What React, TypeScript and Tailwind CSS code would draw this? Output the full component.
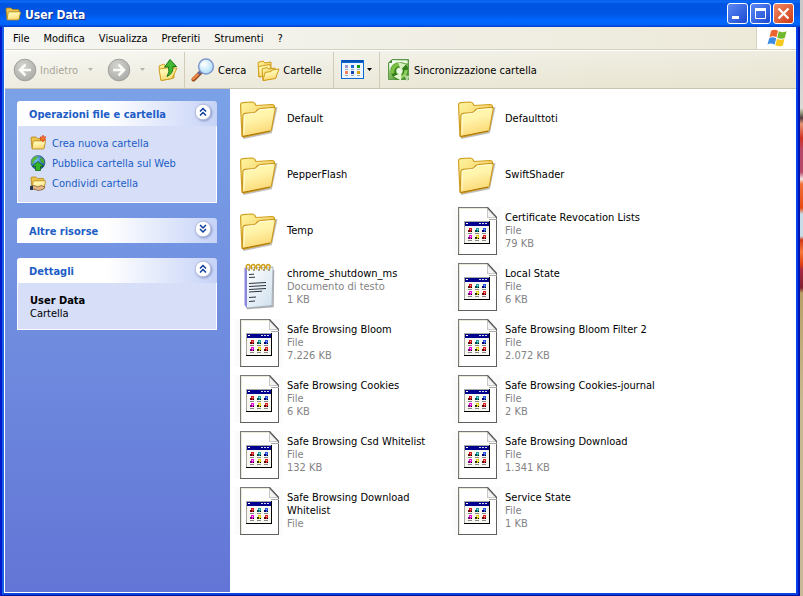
import type { ReactNode } from "react";

type Entry = { name: string; kind: "folder" | "text" | "file"; type?: string; size?: string };

const entries: Entry[] = [
  { name: "Default", kind: "folder" },
  { name: "Defaulttoti", kind: "folder" },
  { name: "PepperFlash", kind: "folder" },
  { name: "SwiftShader", kind: "folder" },
  { name: "Temp", kind: "folder" },
  { name: "Certificate Revocation Lists", kind: "file", type: "File", size: "79 KB" },
  { name: "chrome_shutdown_ms", kind: "text", type: "Documento di testo", size: "1 KB" },
  { name: "Local State", kind: "file", type: "File", size: "6 KB" },
  { name: "Safe Browsing Bloom", kind: "file", type: "File", size: "7.226 KB" },
  { name: "Safe Browsing Bloom Filter 2", kind: "file", type: "File", size: "2.072 KB" },
  { name: "Safe Browsing Cookies", kind: "file", type: "File", size: "6 KB" },
  { name: "Safe Browsing Cookies-journal", kind: "file", type: "File", size: "2 KB" },
  { name: "Safe Browsing Csd Whitelist", kind: "file", type: "File", size: "132 KB" },
  { name: "Safe Browsing Download", kind: "file", type: "File", size: "1.341 KB" },
  { name: "Safe Browsing Download Whitelist", kind: "file", type: "File" },
  { name: "Service State", kind: "file", type: "File", size: "1 KB" },
];

/* Gradients shared by every icon on the page. */
function IconDefs() {
  return (
    <svg className="absolute size-0" aria-hidden="true">
      <defs>
        <linearGradient id="folderFront" x1="0" y1="0" x2="0.3" y2="1">
          <stop offset="0" stopColor="#fffaa8" />
          <stop offset="0.45" stopColor="#fff4ac" />
          <stop offset="1" stopColor="#fcd874" />
        </linearGradient>
        <linearGradient id="folderBack" x1="0" y1="0" x2="1" y2="1">
          <stop offset="0" stopColor="#fff6a0" />
          <stop offset="1" stopColor="#eebc48" />
        </linearGradient>
        <linearGradient id="pad" x1="0" y1="0" x2="1" y2="1">
          <stop offset="0" stopColor="#ffffff" />
          <stop offset="1" stopColor="#cfe0ee" />
        </linearGradient>
        <radialGradient id="disc" cx="0.4" cy="0.3" r="0.8">
          <stop offset="0" stopColor="#d2d2ce" />
          <stop offset="1" stopColor="#a8a8a4" />
        </radialGradient>
        <radialGradient id="lens" cx="0.4" cy="0.35" r="0.7">
          <stop offset="0" stopColor="#ffffff" />
          <stop offset="1" stopColor="#a8dcf8" />
        </radialGradient>
        <linearGradient id="sync" x1="0" y1="0" x2="1" y2="1">
          <stop offset="0" stopColor="#e4f2dc" />
          <stop offset="0.35" stopColor="#8cc468" />
          <stop offset="1" stopColor="#3c8424" />
        </linearGradient>
        <radialGradient id="globe" cx="0.35" cy="0.3" r="0.8">
          <stop offset="0" stopColor="#7cc4f8" />
          <stop offset="1" stopColor="#0c3c9c" />
        </radialGradient>
      </defs>
    </svg>
  );
}

function FolderIcon() {
  return (
    <svg viewBox="0 0 48 48" className="size-12 shrink-0" aria-hidden="true">
      <path d="M8 43 L36 37.500 L41.500 12" fill="none" stroke="#8c8c8c" strokeOpacity="0.55" strokeWidth="2" />
      <path d="M5.500 10 Q5.500 8 7.500 7.700 L17 7 Q19 7 20 8.500 L21 10.500 L37 9.500 Q39.500 9.500 39.500 12 L36 34 L7 41 Z" fill="url(#folderBack)" stroke="#d0a020" strokeWidth="1.200" />
      <path d="M8 20 Q8.300 18.500 10 18.300 L19 17.500 Q20.500 17.300 21.500 16 L23 14.500 Q24 13.600 25.500 13.500 L38.500 12.300 Q40.500 12.300 40.200 14 L36.500 34.500 Q36.200 36 34.500 36.500 L9.500 42 Q7.300 42.300 7.300 40 Z" fill="url(#folderFront)" stroke="#cc981c" strokeWidth="1.200" />
      <path d="M9 39 L9.300 20.500 Q9.500 19.600 10.500 19.500 L20 18.600 L24.500 14.900 L38.500 13.700" fill="none" stroke="#fffde0" strokeWidth="1" />
      <path d="M7.500 41.500 L35 36" stroke="#a87400" strokeWidth="1" />
    </svg>
  );
}

function TextFileIcon() {
  return (
    <svg viewBox="0 0 48 48" className="size-12 shrink-0" aria-hidden="true">
      <path d="M12 45.500 L38 43.500 L38.500 7" fill="none" stroke="#888" strokeOpacity="0.7" strokeWidth="1.500" />
      <path d="M11 5 L38 4 L37 42.500 L11.500 45 Z" fill="url(#pad)" stroke="#9aa4b8" strokeWidth="0.800" />
      <path d="M9.500 4.500 L12 5 L12 45 L9.500 42 Z" fill="#8c88dc" />
      {[12, 17, 22, 27, 32].map((x) => (
        <g key={x} fill="none">
          <path d={`M${x} 6.500 Q${x - 2} 1.500 ${x + 1.5} 1.500 Q${x + 4} 2 ${x + 2.5} 6`} stroke="#d0a018" strokeWidth="1.500" />
          <path d={`M${x + 1} 7 h2`} stroke="#5c4808" strokeWidth="1" />
        </g>
      ))}
      <g stroke="#2c3440" strokeWidth="1">
        <path d="M14 11.500 L19 11.200 M14 14.500 L20 14.200" />
        <path d="M14 20.500 L31 19.500 M14 23.500 L31 22.500 M14 26.500 L31 25.500 M14 29 L27 28.200" />
        <path d="M14 34.500 L21 34 M14 38.500 L20 38" />
      </g>
    </svg>
  );
}

const miniIcons = [
  { x: 15, y: 21, main: "#d01818", side: "#680000" },
  { x: 22, y: 21, main: "#18a0a8", side: "#004848" },
  { x: 29, y: 21, main: "#2050e8", side: "#000068" },
  { x: 15, y: 28, main: "#e810d8", side: "#780078" },
  { x: 22, y: 28, main: "#e8d010", side: "#303000" },
  { x: 29, y: 28, main: "#e02020", side: "#680000" },
];

function GenericFileIcon() {
  return (
    <svg viewBox="0 0 48 48" className="size-12 shrink-0 bg-[#fbfbfb]" shapeRendering="crispEdges" aria-hidden="true">
      <path d="M5 0 H35 L44 9 V48 H5 Z" fill="#ffffff" />
      <path d="M6.500 47 V1.500 H34" fill="none" stroke="#e4ecd8" strokeWidth="1" />
      <path d="M5.500 48 V0.500 H35" fill="none" stroke="#787878" strokeWidth="1" />
      <path d="M5 47.500 H43.500 V10" fill="none" stroke="#606060" strokeWidth="1" />
      <path d="M34 1 L34 11 L44 11 Z" fill="#c8c8c8" shapeRendering="geometricPrecision" />
      <path d="M35 3 L35 10 L42 10 Z" fill="#f4f4f4" shapeRendering="geometricPrecision" />
      <path d="M34.500 0.500 L43.700 10.500" stroke="#505050" strokeWidth="1.200" shapeRendering="geometricPrecision" />
      <path d="M36 12.500 H44" stroke="#a8a8a8" strokeWidth="1" />
      <rect x="11" y="14" width="26" height="23" fill="#000000" />
      <rect x="11" y="14" width="25" height="22" fill="#a8a8a0" />
      <rect x="12" y="15" width="24" height="21" fill="#f8f8f0" />
      <rect x="12" y="15" width="24" height="4" fill="#000090" />
      <rect x="13" y="16" width="2" height="1" fill="#ffffff" />
      <rect x="26" y="16" width="2" height="1" fill="#d8d8f0" />
      <rect x="29" y="16" width="2" height="1" fill="#d8d8f0" />
      <rect x="32" y="16" width="2" height="1" fill="#d8d8f0" />
      {miniIcons.map((m) => (
        <g key={`${m.x}-${m.y}`}>
          <rect x={m.x + 1} y={m.y} width="3" height="4" fill={m.main} />
          <rect x={m.x} y={m.y + 2} width="2" height="2" fill={m.side} />
          <rect x={m.x + 3} y={m.y + 3} width="1" height="1" fill="#000000" />
          <rect x={m.x + 2} y={m.y + 1} width="1" height="1" fill="#ffffff" fillOpacity="0.6" />
          <rect x={m.x} y={m.y + 5} width="4" height="1" fill="#888888" />
        </g>
      ))}
    </svg>
  );
}

function SmallFolder({ children, className }: { children?: ReactNode; className: string }) {
  return (
    <svg viewBox="0 0 16 16" className={className} aria-hidden="true">
      <path d="M1 3 Q1 2 2 2 H6 L7.500 3.500 H13 Q14 3.500 14 4.500 V13 H2 Z" fill="#f0c450" stroke="#b08414" strokeWidth="0.800" />
      <path d="M2 14 L3.200 6.500 Q3.400 5.800 4 5.800 H15 Q15.700 5.800 15.500 6.500 L14 13.300 Q13.800 14 13 14 Z" fill="url(#folderFront)" stroke="#b08414" strokeWidth="0.800" />
      {children}
    </svg>
  );
}

function NewFolderIcon() {
  return (
    <SmallFolder className="size-4">
      <path d="M13 0 L13.800 2 L16 1.800 L14.800 3.500 L16 5 L13.800 5 L13 7 L12 5 L10 5.200 L11.200 3.500 L10 2 L12.200 2 Z" fill="#f07828" stroke="#d83010" strokeWidth="0.600" />
    </SmallFolder>
  );
}

function ShareFolderIcon() {
  return (
    <SmallFolder className="size-4">
      <path d="M1 11 L4 10.500 L8 12 L11 10.500 L15 12 L13 14.500 L8 15.500 L4 14 L1 14 Z" fill="#e8b888" stroke="#5c3c1c" strokeWidth="0.600" />
      <rect x="0" y="11" width="3" height="4" fill="#283850" />
    </SmallFolder>
  );
}

function PublishIcon() {
  return (
    <svg viewBox="0 0 16 16" className="size-4" aria-hidden="true">
      <circle cx="8" cy="7.500" r="7" fill="url(#globe)" stroke="#1c3870" strokeWidth="0.500" />
      <path d="M2 4 Q5 0.500 8 1 L7 4 L4 6 L3 9 L1.200 8 Z" fill="#58b838" />
      <path d="M11 2 L14 5 L14.500 9 L12 8 L10 5 Z" fill="#48a830" />
      <path d="M8 6.500 L13.500 11.500 H10.500 V15.500 H5.500 V11.500 H2.500 Z" fill="#34b428" stroke="#0c6410" strokeWidth="0.800" />
    </svg>
  );
}

function ArrowDisc({ flip }: { flip?: boolean }) {
  return (
    <svg viewBox="0 0 24 24" className="size-6 shrink-0" aria-hidden="true">
      <circle cx="12" cy="12" r="10.800" fill="url(#disc)" stroke="#a0a09c" strokeWidth="1" />
      <path
        d={flip ? "M6 12 H16 M11.500 6.500 L17 12 L11.500 17.500" : "M18 12 H8 M12.500 6.500 L7 12 L12.500 17.500"}
        fill="none"
        stroke="#fbfbf8"
        strokeWidth="2.600"
      />
    </svg>
  );
}

function Caret({ className }: { className: string }) {
  return (
    <svg viewBox="0 0 5 3" className={`h-[3px] w-[5px] shrink-0 ${className}`} aria-hidden="true">
      <path d="M0 0 H5 L2.500 3 Z" fill="currentColor" />
    </svg>
  );
}

function UpIcon() {
  return (
    <svg viewBox="0 0 22 24" className="h-6 w-[22px]" aria-hidden="true">
      <path d="M2 8 L7 6 L9 8 L17 7 L17 20 L4 22 Z" fill="url(#folderBack)" stroke="#c89818" strokeWidth="0.900" />
      <path d="M2 11 L13 9.500 L15 20.500 L4 22.500 Z" fill="url(#folderFront)" stroke="#c89818" strokeWidth="0.900" />
      <path d="M4 22.500 L15 20.500 L20 10 L17 10" fill="#fce488" stroke="#c89818" strokeWidth="0.900" />
      <path d="M13 1.500 L19.500 8.500 L16 8.500 Q16.500 15.500 10 18.500 Q13 14 11.500 8.800 L7.500 9.200 Z" fill="#44b834" stroke="#147814" strokeWidth="1" />
    </svg>
  );
}

function SearchIcon() {
  return (
    <svg viewBox="0 0 24 24" className="size-6 shrink-0" aria-hidden="true">
      <path d="M2.500 21.500 L10 14" stroke="#984818" strokeWidth="4" strokeLinecap="round" />
      <path d="M2.200 21 L7 16.300" stroke="#f08848" strokeWidth="2.400" strokeLinecap="round" />
      <path d="M7.500 16 L10.500 13" stroke="#5868a8" strokeWidth="2.600" />
      <circle cx="15" cy="8.500" r="7.400" fill="url(#lens)" stroke="#8098cc" strokeWidth="1.500" />
      <path d="M10.500 8 Q11 4.500 15 4" fill="none" stroke="#ffffff" strokeWidth="1.500" />
    </svg>
  );
}

function FoldersIcon() {
  return (
    <svg viewBox="0 0 24 24" className="size-6 shrink-0" aria-hidden="true">
      <path d="M2 4.500 L7 3 L9 5 L15 4 L15 16 L3 19 Z" fill="url(#folderBack)" stroke="#d09c18" strokeWidth="1" />
      <path d="M3 19 L2.500 8.500 L14 6.500 L15 16 Z" fill="url(#folderFront)" stroke="#d09c18" strokeWidth="1" />
      <path d="M6 11 L11 9.500 L13 11 L19 10 L20 20 L7 22.500 Z" fill="url(#folderBack)" stroke="#d09c18" strokeWidth="1" />
      <path d="M7 22.500 L9 14.500 L15 13.500 L16 12 L23 11 L19.500 20.500 Z" fill="url(#folderFront)" stroke="#d09c18" strokeWidth="1" />
    </svg>
  );
}

const viewDots = [
  { x: 4, y: 5, c: "#9c98d0" },
  { x: 10, y: 5, c: "#1868d0" },
  { x: 16, y: 5, c: "#109810" },
  { x: 4, y: 11, c: "#f88058" },
  { x: 10, y: 11, c: "#1048b0" },
  { x: 16, y: 11, c: "#d8a010" },
];

function ViewsIcon() {
  return (
    <svg viewBox="0 0 23 19" className="h-[19px] w-[23px] shrink-0" shapeRendering="crispEdges" aria-hidden="true">
      <rect x="0" y="0" width="23" height="19" fill="#0868d0" />
      <rect x="1" y="3" width="21" height="15" fill="#eef4fc" />
      <rect x="1" y="0" width="21" height="2" fill="#0450b8" />
      {viewDots.map((d) => (
        <g key={`${d.x}-${d.y}`}>
          <rect x={d.x} y={d.y} width="3" height="3" fill={d.c} />
          <rect x={d.x} y={d.y + 4} width="3" height="1" fill="#a0a8b8" />
        </g>
      ))}
    </svg>
  );
}

function SyncIcon() {
  return (
    <svg viewBox="0 0 24 24" className="size-6 shrink-0" aria-hidden="true">
      <path d="M5 1.500 H21.500 V21.500 H1.500 V5 Z" fill="url(#sync)" stroke="#5c9848" strokeWidth="1" />
      <path d="M2.500 13 Q3.500 4 14 4 L20.500 5.500 V2.500 H5.500 L2.500 5.500 Z" fill="#f4faf0" />
      <path d="M5 1.500 V5 H1.500 Z" fill="#4c8838" />
      <circle cx="12.500" cy="13" r="6.200" fill="none" stroke="#2f7c18" strokeWidth="5" />
      <circle cx="12.500" cy="13" r="3" fill="#eef8e4" />
      <path d="M6 15.500 A6.800 6.800 0 0 1 12 6.500" fill="none" stroke="#7cc044" strokeWidth="3.400" />
      <path d="M11 4 L19 6.500 L13.500 12 Z" fill="#d8f0c0" />
      <path d="M19 12 A6.800 6.800 0 0 1 13 19.500" fill="none" stroke="#8ccc58" strokeWidth="3.400" />
      <path d="M14.500 14.500 L6.500 18.500 L14 22.500 Z" fill="#e4f6d0" />
      <path d="M17 17 L22.500 18 L20 23.500 Z" fill="#b4d8a0" />
    </svg>
  );
}

function FlagLogo() {
  return (
    <svg viewBox="0 0 20 18" className="h-[18px] w-5" aria-hidden="true">
      <path d="M4 2 Q7 -0.500 11 1.800 L9.500 8.200 Q6 6.200 2.500 8.300 Z" fill="#ec6430" />
      <path d="M11.800 2.300 Q15 4 19.500 2.200 L17.800 9 Q14 10.500 10.300 8.700 Z" fill="#70b82c" />
      <path d="M2.200 9.300 Q5.500 7.300 9.200 9.300 L7.600 15.800 Q4 13.600 0.500 15.500 Z" fill="#3c8ce4" />
      <path d="M10 9.700 Q13.500 11.500 17.500 10 L15.900 16.500 Q12 18.300 8.400 16.300 Z" fill="#f8c820" />
    </svg>
  );
}

function Chevron({ down }: { down?: boolean }) {
  return (
    <svg viewBox="0 0 18 18" className="size-[18px] drop-shadow-[1px_1px_1px_#8c98c8]" aria-hidden="true">
      <circle cx="9" cy="9" r="7.800" fill="#ffffff" stroke="#b4bcdc" strokeWidth="1" />
      <path
        d={down ? "M6 5 L9 8 L12 5 M6 9 L9 12 L12 9" : "M6 8.500 L9 5.500 L12 8.500 M6 12.500 L9 9.500 L12 12.500"}
        fill="none"
        stroke="#0c3c9c"
        strokeWidth="1.500"
      />
    </svg>
  );
}

function Panel({ title, open, children }: { title: string; open: boolean; children?: ReactNode }) {
  return (
    <section>
      <div className="flex h-[25px] items-start justify-between rounded-t-[3px] bg-linear-to-r from-white from-45% to-[#c6d3f7] pt-[2px] pr-[5px] pl-3">
        <h2 className="pt-[5px] font-bold text-[#215dc6]">{title}</h2>
        <button type="button" aria-label={title} aria-expanded={open} className="size-[18px]">
          <Chevron down={!open} />
        </button>
      </div>
      {open && <div className="border border-t-0 border-white bg-[#d6dff7] px-3">{children}</div>}
    </section>
  );
}

const tasks = [
  { label: "Crea nuova cartella", icon: <NewFolderIcon /> },
  { label: "Pubblica cartella sul Web", icon: <PublishIcon /> },
  { label: "Condividi cartella", icon: <ShareFolderIcon /> },
];

const menus = ["File", "Modifica", "Visualizza", "Preferiti", "Strumenti", "?"];

const captionButton =
  "flex size-[21px] items-center justify-center rounded-[3px] border border-white bg-linear-to-br";

function TitleBar() {
  return (
    <header className="flex h-[27px] items-center bg-[linear-gradient(180deg,#0a5ae8_0%,#0a6cf8_6%,#0054e0_14%,#0055e5_50%,#0066ff_75%,#0064fa_90%,#003cc8_100%)] pr-[6px] pl-[5px]">
      <SmallFolder className="size-4" />
      <h1 className="flex-1 pt-[2px] pl-1 text-xs font-bold text-white [text-shadow:1px_1px_0_#0c2c88]">User Data</h1>
      <div className="flex gap-[2px]">
        <button type="button" aria-label="Riduci a icona" className={`${captionButton} from-[#5c88f4] to-[#1c48d0]`}>
          <svg viewBox="0 0 19 19" className="size-[19px]" aria-hidden="true">
            <rect x="4" y="12" width="7" height="3" fill="#ffffff" />
          </svg>
        </button>
        <button type="button" aria-label="Ingrandisci" className={`${captionButton} from-[#5c88f4] to-[#1c48d0]`}>
          <svg viewBox="0 0 19 19" className="size-[19px]" aria-hidden="true">
            <path d="M4.500 5 V14.500 H14.500 V5" fill="none" stroke="#ffffff" />
            <rect x="4" y="4" width="11" height="3" fill="#ffffff" />
          </svg>
        </button>
        <button type="button" aria-label="Chiudi" className={`${captionButton} from-[#f08860] to-[#cc3810]`}>
          <svg viewBox="0 0 19 19" className="size-[19px]" aria-hidden="true">
            <path d="M4.500 4.500 L14.500 14.500 M14.500 4.500 L4.500 14.500" stroke="#ffffff" strokeWidth="2.200" />
          </svg>
        </button>
      </div>
    </header>
  );
}

function MenuBar() {
  return (
    <nav className="flex h-6 border-b border-white bg-linear-to-r from-[#f6f6f4] to-[#ece9d8]">
      <ul className="flex flex-1 items-center border-b border-[#d6d2c0] pl-px">
        {menus.map((m) => (
          <li key={m}>
            <button type="button" className="px-[7px]">{m}</button>
          </li>
        ))}
      </ul>
      <div className="flex w-10 items-center justify-center border-b border-l border-[#d6d2c0] bg-white">
        <FlagLogo />
      </div>
    </nav>
  );
}

function Toolbar() {
  const group = "flex h-9 items-center";
  return (
    <div className="flex h-[38px] items-center border-b border-[#c8c4b0] bg-linear-to-br from-[#f8f8f4] via-[#eeecdf] to-[#e8e4d0]">
      <div className={`${group} w-[179px] pl-2`}>
        <button type="button" disabled className="flex w-[66px] items-center gap-[3px] text-[#a8a698]">
          <ArrowDisc />
          <span className="pt-px">Indietro</span>
        </button>
        <button type="button" disabled aria-label="Cronologia indietro" className="ml-[9px] text-[#b8b5a4]">
          <Caret className="block" />
        </button>
        <button type="button" disabled aria-label="Avanti" className="ml-[14px]">
          <ArrowDisc flip />
        </button>
        <button type="button" disabled aria-label="Cronologia avanti" className="ml-[9px] text-[#b8b5a4]">
          <Caret className="block" />
        </button>
        <button type="button" aria-label="Livello superiore" className="ml-3">
          <UpIcon />
        </button>
      </div>
      <div className={`${group} w-[149px] gap-[10px] border-l border-[#d0ccb8] pl-[6px]`}>
        <button type="button" className="flex items-center gap-[3px]">
          <SearchIcon />
          <span className="pt-px">Cerca</span>
        </button>
        <button type="button" className="flex items-center gap-[3px]">
          <FoldersIcon />
          <span className="pt-px">Cartelle</span>
        </button>
      </div>
      <div className={`${group} w-[46px] border-l border-[#d0ccb8] pl-[7px]`}>
        <button type="button" aria-label="Visualizza" className="flex items-center gap-[3px]">
          <ViewsIcon />
          <Caret className="text-black" />
        </button>
      </div>
      <div className={`${group} border-l border-[#d0ccb8] pl-[7px]`}>
        <button type="button" className="flex items-center gap-[3px]">
          <SyncIcon />
          <span className="pt-px">Sincronizzazione cartella</span>
        </button>
      </div>
    </div>
  );
}

function Sidebar() {
  return (
    <aside className="flex w-[225px] shrink-0 flex-col gap-[15px] bg-linear-to-b from-[#7ba2e7] to-[#6375d6] pt-3 pr-[13px] pl-3">
      <Panel title="Operazioni file e cartella" open>
        <ul className="flex flex-col gap-1 pt-[9px] pb-[11px] text-[#215dc6]">
          {tasks.map((t) => (
            <li key={t.label}>
              <a href="#" className="flex h-4 items-center gap-[6px]">
                {t.icon}
                {t.label}
              </a>
            </li>
          ))}
        </ul>
      </Panel>
      <Panel title="Altre risorse" open={false} />
      <Panel title="Dettagli" open>
        <div className="pt-[11px] pb-[9px]">
          <p className="font-bold">User Data</p>
          <p>Cartella</p>
        </div>
      </Panel>
    </aside>
  );
}

function FileItem({ entry }: { entry: Entry }) {
  return (
    <li className="flex h-12 items-center gap-1">
      {entry.kind === "folder" && <FolderIcon />}
      {entry.kind === "text" && <TextFileIcon />}
      {entry.kind === "file" && <GenericFileIcon />}
      <div className="w-[154px] pb-[2px]">
        <p>{entry.name}</p>
        {entry.type && <p className="text-[#848484]">{entry.type}</p>}
        {entry.size && <p className="text-[#848484]">{entry.size}</p>}
      </div>
    </li>
  );
}

export default function App() {
  return (
    <div className="flex min-h-screen font-['DejaVu_Sans_Condensed','DejaVu_Sans',sans-serif] text-[11px] leading-[13px] text-black">
      <IconDefs />
      <div className="flex min-w-0 flex-1 flex-col">
        <TitleBar />
        <div className="flex flex-1 flex-col border-r-2 border-b border-l-2 border-r-[#0014b0] border-b-[#00109c] border-l-[#0019cf]">
          <div className="flex flex-1 flex-col border-x-2 border-b-2 border-r-[#0440f0] border-b-[#0c44e0] border-l-[#1660e8]">
            <div className="flex flex-1 flex-col border-b border-l border-white bg-white">
              <MenuBar />
              <Toolbar />
              <div className="flex flex-1">
                <Sidebar />
                <main className="flex-1 bg-white pt-[6px] pl-[5px]">
                  <ul className="grid grid-cols-[repeat(auto-fill,218px)] gap-y-2">
                    {entries.map((e) => (
                      <FileItem key={e.name} entry={e} />
                    ))}
                  </ul>
                </main>
              </div>
            </div>
          </div>
        </div>
      </div>
      <div className="w-[3px] bg-[linear-gradient(180deg,#c8c8c8_0px,#dcdad4_108px,#909878_113px,#503840_118px,#e89878_124px,#d03020_138px,#b84868_150px,#b84868_172px,#f4e8e8_179px,#f07038_184px,#e84810_208px,#c8dce8_214px,#c8dce8_236px,#d03818_240px,#f87838_252px,#e04010_264px,#a82840_270px,#802030_288px,#b8a068_293px,#c8b890_400px,#c8b898_100%)]" />
    </div>
  );
}
